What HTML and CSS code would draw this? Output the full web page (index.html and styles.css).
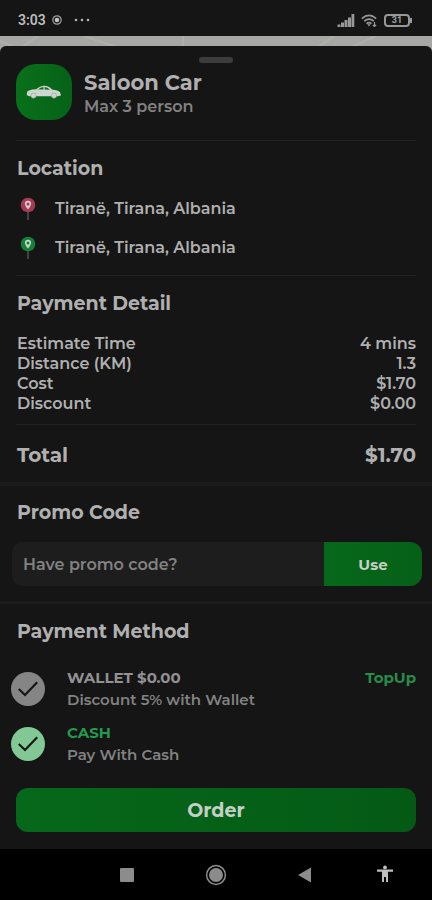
FILE: index.html
```html
<!DOCTYPE html>
<html lang="en">
<head>
<meta charset="utf-8">
<meta name="viewport" content="width=device-width, initial-scale=1">
<title>Order a ride</title>
<link rel="stylesheet" href="styles.css">
</head>
<body>
<header class="status">
  <div class="status-group">
    <span class="clock">3:03</span>
    <svg width="10" height="10" viewBox="0 0 10 10" aria-hidden="true"><circle cx="5" cy="5" r="4.2" fill="none" stroke="#a0a0a0" stroke-width="1.2"/><circle cx="5" cy="5" r="2.3" fill="#c4c4c4"/></svg>
    <svg class="dots" width="16" height="4" viewBox="0 0 16 4" aria-hidden="true"><g fill="#b4b4b4"><circle cx="2" cy="2" r="1.3"/><circle cx="8" cy="2" r="1.3"/><circle cx="14" cy="2" r="1.3"/></g></svg>
  </div>
  <div class="status-group status-right">
    <svg width="18" height="13" viewBox="0 0 18 13" aria-hidden="true"><path d="M.5 10.500h3V13h-3zM4 8.500h3V13H4zM7.500 6h3v7h-3zM11 3.500h3V13h-3zM14.500 0h2.800v13h-2.800z" fill="#989898"/></svg>
    <svg width="17" height="13" viewBox="0 0 17 13" aria-hidden="true"><g fill="none" stroke="#989898" stroke-width="1.700"><path d="M.8 4.600Q8 -1.800 15.200 4.600"/><path d="M3.200 7.200Q8 3 12.800 7.200"/><path d="M5.500 9.600Q8 7.600 10.500 9.600"/></g><path d="M6.300 10.300h3.400L8 12.600z" fill="#989898"/><path d="M13.500 8v4.500M11.800 10.800l1.700 1.700 1.700-1.700" fill="none" stroke="#989898" stroke-width="1.200"/></svg>
    <span class="battery">31</span>
  </div>
</header>
<div class="map" aria-hidden="true">
  <svg width="100%" height="11" aria-hidden="true"><g fill="none" stroke="#b0b0ac" stroke-width="2"><path d="M0 5L14 11M22 11L38 0M84 0L116 11M183 0V11M318 11L334 0M352 11L376 0"/></g></svg>
</div>
<main class="sheet">
  <div class="handle"></div>
  <section class="block car">
    <div class="car-icon">
      <svg width="36" height="14" viewBox="0 0 36 14" aria-hidden="true"><path d="M1 7Q2 4.800 10 4.300Q14 1 17.500.8Q22.500.4 26 4.500Q32 5.200 34 7.300L35 10.300 32.500 11.300H3.500L.8 10.300z" fill="#cfd6cf"/><path d="M12 4.500Q14.500 2.200 17.500 2V4.600zM18.700 2Q21.500 2 24 4.700L18.700 4.600z" fill="#116b21"/><circle cx="7.500" cy="10.600" r="2.600" fill="#cfd6cf" stroke="#7fa786" stroke-width=".6"/><circle cx="28" cy="10.600" r="2.600" fill="#cfd6cf" stroke="#7fa786" stroke-width=".6"/></svg>
    </div>
    <div>
      <h1 class="car-name">Saloon Car</h1>
      <p class="car-info">Max 3 person</p>
    </div>
  </section>
  <section class="block location">
    <h2>Location</h2>
    <ul class="places">
      <li><svg class="pin pin-from" width="16" height="24" viewBox="0 0 16 24" aria-hidden="true"><path d="M8 14v9" stroke="#4e4e4e" stroke-width="1.600"/><circle cx="8" cy="8" r="7.300" fill="currentColor"/><path d="M8 3.700a3.100 3.100 0 0 0-3.100 3.100C4.900 9 8 12.500 8 12.500S11.100 9 11.100 6.800A3.100 3.100 0 0 0 8 3.700z" fill="#d3cfd0"/><circle cx="8" cy="6.900" r="1.500" fill="currentColor"/></svg>Tiranë, Tirana, Albania</li>
      <li><svg class="pin pin-to" width="16" height="24" viewBox="0 0 16 24" aria-hidden="true"><path d="M8 14v9" stroke="#4e4e4e" stroke-width="1.600"/><circle cx="8" cy="8" r="7.300" fill="currentColor"/><path d="M8 3.700a3.100 3.100 0 0 0-3.100 3.100C4.900 9 8 12.500 8 12.500S11.100 9 11.100 6.800A3.100 3.100 0 0 0 8 3.700z" fill="#c6d6c8"/><circle cx="8" cy="6.900" r="1.500" fill="currentColor"/></svg>Tiranë, Tirana, Albania</li>
    </ul>
  </section>
  <section class="block detail">
    <h2>Payment Detail</h2>
    <dl class="costs">
      <div><dt>Estimate Time</dt><dd>4 mins</dd></div>
      <div><dt>Distance (KM)</dt><dd>1.3</dd></div>
      <div><dt>Cost</dt><dd>$1.70</dd></div>
      <div><dt>Discount</dt><dd>$0.00</dd></div>
    </dl>
  </section>
  <section class="total">
    <h2>Total</h2>
    <strong>$1.70</strong>
  </section>
  <section class="promo">
    <h2><label for="promo">Promo Code</label></h2>
    <form class="promo-form">
      <input id="promo" type="text" placeholder="Have promo code?">
      <button type="button">Use</button>
    </form>
  </section>
  <section class="method">
    <h2>Payment Method</h2>
    <div class="options">
      <div class="option">
        <label class="choice">
          <span class="tick"><input type="radio" name="method"><svg width="20" height="16" viewBox="0 0 20 16" aria-hidden="true"><path d="M.8 8L7 14 19.200 1.200" fill="none" stroke="#161616" stroke-width="2.200"/></svg></span>
          <span class="choice-text"><b>WALLET $0.00</b><span>Discount 5% with Wallet</span></span>
        </label>
        <a class="topup" href="#topup">TopUp</a>
      </div>
      <div class="option">
        <label class="choice">
          <span class="tick"><input type="radio" name="method" checked><svg width="20" height="16" viewBox="0 0 20 16" aria-hidden="true"><path d="M.8 8L7 14 19.200 1.200" fill="none" stroke="#161616" stroke-width="2.200"/></svg></span>
          <span class="choice-text"><b class="active">CASH</b><span>Pay With Cash</span></span>
        </label>
      </div>
    </div>
    <button class="order" type="button">Order</button>
  </section>
</main>
<nav class="system">
  <div class="keys">
    <button type="button" aria-label="Recent apps"><svg width="24" height="24" viewBox="0 0 24 24"><rect x="5" y="5" width="14" height="14" rx="1" fill="#8c8c8c"/></svg></button>
    <button type="button" aria-label="Home"><svg width="24" height="24" viewBox="0 0 24 24"><circle cx="12" cy="12" r="9.400" fill="none" stroke="#8c8c8c" stroke-width="1.500"/><circle cx="12" cy="12" r="7" fill="#8c8c8c"/></svg></button>
    <button type="button" aria-label="Back"><svg width="24" height="24" viewBox="0 0 24 24"><path d="M5 12L18 4.500v15z" fill="#8c8c8c"/></svg></button>
  </div>
  <button type="button" aria-label="Accessibility"><svg width="24" height="24" viewBox="0 0 24 24"><path d="M4 6.500h16v2.200h-5V19h-2v-5h-2v5H9V8.700H4z" fill="#bebebe"/><circle cx="12" cy="4.400" r="1.900" fill="#bebebe"/></svg></button>
</nav>
</body>
</html>
```
FILE: styles.css
```css
* { box-sizing: border-box; }
body {
  margin: 0;
  min-height: 100vh;
  display: flex;
  flex-direction: column;
  background: #151515;
  color: #b0b0b0;
  font-family: Montserrat, Inter, sans-serif;
  font-size: 16px;
  font-weight: 600;
}
h1, h2, p, ul, dl, dd { margin: 0; padding: 0; }
h2 { padding-left: 1px; font-size: 19px; line-height: 24px; font-weight: 700; }
button, input { font: inherit; border: 0; padding: 0; margin: 0; }
svg { display: block; flex: none; }

.status {
  height: 36px;
  padding: 4px 20px 0 18px;
  display: flex;
  justify-content: space-between;
  align-items: center;
}
.status-group { display: flex; align-items: center; gap: 6px; }
.clock { font: 600 14px/20px Roboto, sans-serif; color: #bcbcbc; }
.dots { margin-left: 6px; }
.battery {
  position: relative;
  width: 26px;
  height: 13px;
  margin-right: 2px;
  border: 2px solid #989898;
  border-radius: 4px;
  font: 700 9px/9px Roboto, sans-serif;
  text-align: center;
  color: #a2a2a2;
}
.battery::after {
  content: "";
  position: absolute;
  right: -4px;
  top: 2px;
  width: 2px;
  height: 5px;
  background: #989898;
}
.map { height: 16px; background: #a7a8a5; }

.sheet {
  flex: 1;
  margin-top: -6px;
  padding-top: 11px;
  background: #151515;
  border-radius: 6px 6px 0 0;
}
.handle {
  width: 34px;
  height: 6px;
  margin: 0 auto 1px;
  border-radius: 3px;
  background: #3c3c3c;
}
.block { margin: 0 16px; border-bottom: 1px solid #202020; }
.car { display: flex; gap: 12px; padding-bottom: 20px; }
.car-icon {
  width: 56px;
  height: 56px;
  border-radius: 20px;
  display: grid;
  place-items: center;
  background: linear-gradient(90deg, #08701a, #066218);
}
.car-name { padding-top: 6px; font-size: 21px; line-height: 26px; font-weight: 700; }
.car-info { line-height: 22px; color: #828282; }
.location { padding: 16px 0 8px; }
.places { margin-top: 8px; list-style: none; }
.places li {
  height: 39px;
  padding-left: 4px;
  display: flex;
  align-items: center;
  gap: 19px;
}
.pin-from { color: #a63a56; }
.pin-to { color: #14803a; }
.detail { padding: 16px 0 10px; }
.costs { margin-top: 18px; padding-left: 1px; }
.costs div {
  display: flex;
  justify-content: space-between;
  line-height: 20px;
}
.total {
  display: flex;
  justify-content: space-between;
  padding: 18px 16px 15px;
  border-bottom: 4px solid #1b1b1b;
  line-height: 24px;
}
.total h2, .total strong { font-size: 20px; font-weight: 700; }
.promo { padding: 15px 10px 15px 12px; border-bottom: 3px solid #1d1d1d; }
.promo h2 { padding-left: 5px; }
.promo-form { display: flex; height: 44px; margin-top: 17px; }
.promo-form input {
  flex: 1;
  min-width: 0;
  padding-left: 11px;
  border-radius: 10px 0 0 10px;
  background: #1d1d1d;
  color: #b0b0b0;
}
.promo-form input::placeholder { color: #828282; opacity: 1; }
.promo-form button {
  width: 98px;
  border-radius: 0 12px 12px 0;
  background: linear-gradient(90deg, #06681a, #066018);
  color: #c4d0c5;
  font-size: 15px;
  font-weight: 700;
}
.method { padding: 16px 16px 17px; }
.options { display: grid; gap: 11px; margin: 23px 0 22px -5px; }
.option, .choice { display: flex; align-items: flex-start; justify-content: space-between; }
.choice { gap: 22px; }
.tick { display: grid; place-items: center; margin-top: 5px; }
.tick input, .tick svg { grid-area: 1 / 1; }
.tick svg { position: relative; pointer-events: none; }
.tick input {
  appearance: none;
  width: 34px;
  height: 34px;
  border-radius: 50%;
  background: #858585;
}
.tick input:checked { background: #82c894; }
.choice-text {
  display: grid;
  font-size: 15px;
  line-height: 22px;
  color: #828282;
}
.choice-text b { font-weight: 700; color: #929292; }
.choice-text .active { color: #25994d; }
.topup {
  font-size: 15px;
  line-height: 22px;
  font-weight: 700;
  color: #288c4a;
  text-decoration: none;
}
.order {
  display: block;
  width: 100%;
  height: 44px;
  border-radius: 12px;
  background: linear-gradient(90deg, #06681a, #045a15);
  color: #c4d0c5;
  font-size: 19px;
  font-weight: 700;
}
.system {
  height: 51px;
  padding: 0 35px 0 115px;
  display: flex;
  align-items: center;
  justify-content: space-between;
  background: #000;
}
.keys { display: flex; gap: 65px; }
.system button { background: none; }
```
